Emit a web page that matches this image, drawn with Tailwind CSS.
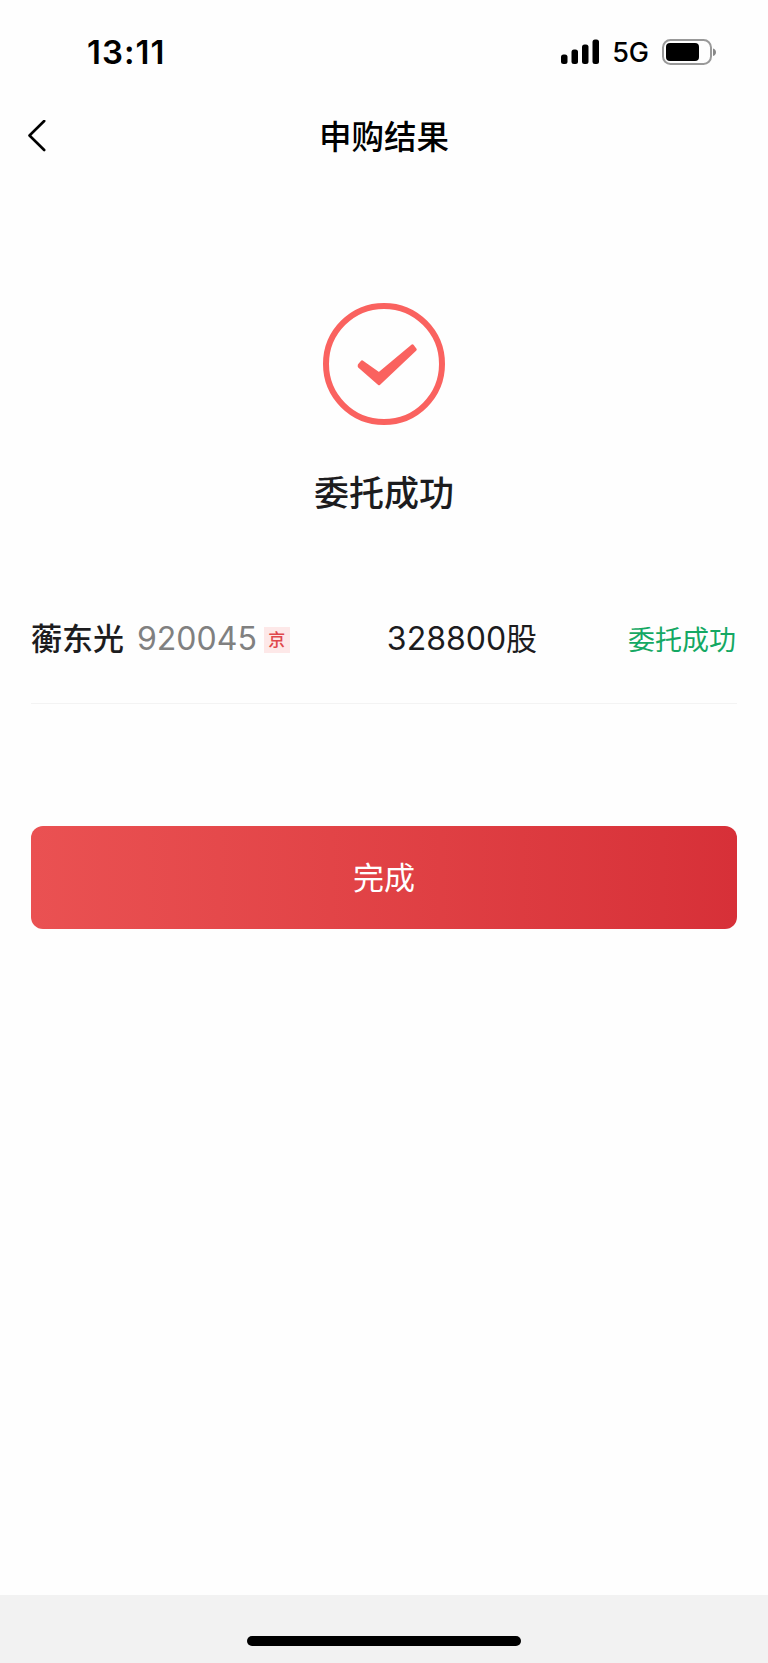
<!DOCTYPE html>
<html lang="zh-CN">
<head>
    <meta charset="UTF-8">
    <meta name="viewport" content="width=device-width, initial-scale=1.0">
    <title>申购结果</title>
    <script src="https://cdn.jsdelivr.net/npm/@tailwindcss/browser@4"></script>
</head>
<body class="bg-[#fefefe] text-[#1c1c1e] font-['Inter','Noto_Sans_CJK_SC',sans-serif]">

    <div class="flex flex-col h-[1663px] w-full overflow-hidden">

        <!-- Status Bar -->
        <div class="flex items-center justify-between h-[102px] pl-[87px] pr-[51px] pt-px text-black">
            <span class="pt-px text-[33px] font-semibold leading-none tracking-[1px]">13:11</span>
            <div class="flex items-center">
                <svg class="w-[40px] h-[26px]" viewBox="0 0 40 26">
                    <rect x="1" y="15.5" width="6.5" height="9.5" rx="2.5"/>
                    <rect x="11.5" y="10.5" width="6.5" height="14.5" rx="2.5"/>
                    <rect x="22" y="5.5" width="6.5" height="19.5" rx="2.5"/>
                    <rect x="32.5" y="0.5" width="6.5" height="24.5" rx="2.5"/>
                </svg>
                <span class="ml-[12px] pt-px text-[27px] font-medium leading-none">5G</span>
                <svg class="ml-[12px] w-[56px] h-[26px]" viewBox="0 0 56 26">
                    <rect x="2" y="1" width="48" height="24" rx="7.5" fill="none" stroke="#999" stroke-width="2"/>
                    <rect x="5" y="4" width="33" height="18" rx="4"/>
                    <path d="M52 9.5c4 1.2 4 6.300 0 7.500z" fill="#888"/>
                </svg>
            </div>
        </div>

        <!-- Header -->
        <div class="grid grid-cols-3 items-center h-[68px] px-[27px] text-black">
            <svg class="w-[20px] h-[32px]" viewBox="0 0 20 32" fill="none" stroke="currentColor" stroke-width="2.6" stroke-linecap="round" stroke-linejoin="round">
                <path d="M17.200 1L2.500 15.500l14.700 14.500"/>
            </svg>
            <h1 class="pt-1 text-center text-[32.5px] font-medium leading-none whitespace-nowrap">申购结果</h1>
        </div>

        <!-- Result -->
        <div class="flex flex-col items-center pt-[133px]">
            <svg class="w-[122px] h-[122px]" viewBox="0 0 122 122">
                <circle cx="61" cy="61" r="58" fill="none" stroke="#fa625f" stroke-width="6"/>
                <path d="M36 62l3-3.500L56 70.500 89.500 42.500l3 4L56 81 36 63.500z" fill="#fa625f" stroke="#fa625f" stroke-width="2.500" stroke-linejoin="round"/>
            </svg>
            <p class="mt-[50px] text-[35px] font-medium leading-[36px]">委托成功</p>
        </div>

        <!-- Order Row -->
        <div class="flex items-center mx-[31px] mt-[93px] h-[100px] pb-[30px] border-b border-[#f3f3f3] whitespace-nowrap">
            <span class="text-[31px] font-medium leading-none">蘅东光</span>
            <span class="ml-[13px] text-[32px] leading-none text-[#808080]">920045</span>
            <span class="mt-[2px] ml-[7px] flex items-center justify-center size-[26px] bg-[#fde8e8] pt-px text-[17px] font-medium leading-none text-[#e0474c]">京</span>
            <span class="ml-[97px] text-[32px] leading-none">328800<span class="text-[31px]">股</span></span>
            <span class="mt-1 mr-px ml-auto text-[27px] leading-none text-[#14a863]">委托成功</span>
        </div>

        <!-- Submit Button -->
        <button class="mx-[31px] mt-[122px] h-[103px] shrink-0 rounded-xl bg-linear-to-r from-[#ea5152] to-[#d73038] text-[31px] leading-none text-white">完成</button>

        <!-- Home Indicator -->
        <div class="flex justify-center mt-auto h-[68px] bg-[#f2f2f2] pt-[41px]">
            <div class="w-[274px] h-[10px] rounded-full bg-black"></div>
        </div>
    </div>

</body>
</html>
